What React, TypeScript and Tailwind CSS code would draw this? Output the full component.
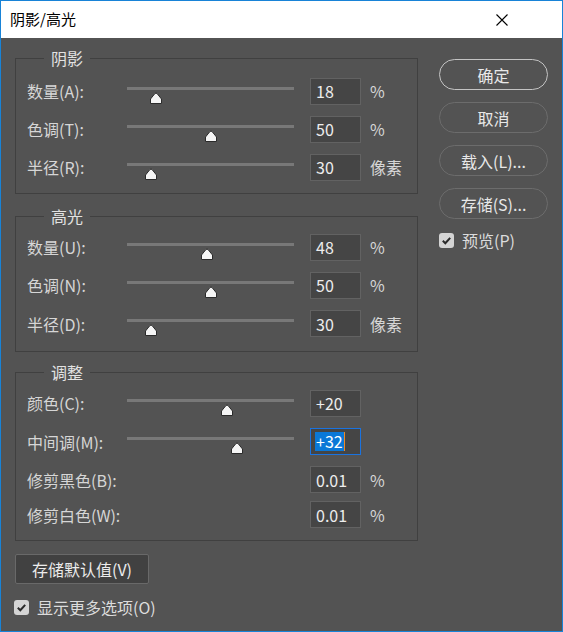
import React from 'react'

const FONT = { fontFamily: '"Microsoft YaHei", "Noto Sans CJK SC", "Noto Sans", sans-serif' }

interface SliderRowProps {
  label: string
  value: string
  pos: number
  unit?: string
  focused?: boolean
  h?: string
}

function Thumb() {
  return (
    <svg width="14" height="14" viewBox="0 0 14 14">
      <path
        d="M1.5 12.5 V8 L5.9 2.6 Q7 1.4 8.1 2.6 L12.5 8 V12.5 Z"
        fill="#f5f5f5"
        stroke="#2b2b2b"
        strokeWidth="1"
        strokeLinejoin="round"
      />
    </svg>
  )
}

function Field({ value, focused }: { value: string; focused?: boolean }) {
  if (focused) {
    return (
      <div className="w-[51px] h-[27px] bg-[#454545] border border-[#1a73e0] flex items-center pl-[4px]">
        <span className="bg-[#0a78d7] text-white text-[16px] leading-[19px] px-[1px]">{value}</span>
        <span className="w-[1px] h-[19px] bg-[#f08a24]" />
      </div>
    )
  }
  return (
    <div className="w-[51px] h-[27px] bg-[#454545] border border-[#626262] flex items-center pl-[5px] text-[16px] leading-[20px] text-[#ededed]">
      {value}
    </div>
  )
}

function SliderRow({ label, value, pos, unit, focused, h = 'h-[38px]' }: SliderRowProps) {
  return (
    <div className={`${h} flex items-center`}>
      <div className="w-[100px] text-[16px] leading-[20px] text-[#d6d6d6] whitespace-nowrap">{label}</div>
      <div className="relative w-[167px] self-stretch">
        <div className="mt-[15px] h-[3px] bg-[#787878]" />
        <div className="absolute top-[19px]" style={{ left: pos - 127 - 7 }}>
          <Thumb />
        </div>
      </div>
      <div className="ml-[16px]">
        <Field value={value} focused={focused} />
      </div>
      {unit && <div className="ml-[9px] text-[16px] leading-[20px] text-[#d6d6d6]">{unit}</div>}
    </div>
  )
}

function PlainRow({ label, value, unit, h }: { label: string; value: string; unit: string; h: string }) {
  return (
    <div className={`${h} flex items-center`}>
      <div className="w-[283px] text-[16px] leading-[20px] text-[#d6d6d6] whitespace-nowrap">{label}</div>
      <Field value={value} />
      <div className="ml-[9px] text-[16px] leading-[20px] text-[#d6d6d6]">{unit}</div>
    </div>
  )
}

function Group({ title, children, className }: { title: string; children: React.ReactNode; className?: string }) {
  return (
    <fieldset className={`border border-[#404040] px-[11px] ${className ?? ''}`}>
      <legend className="ml-[17px] px-[7px] text-[16px] leading-[20px] text-[#e2e2e2]">{title}</legend>
      {children}
    </fieldset>
  )
}

function Check({ label }: { label: string }) {
  return (
    <div className="flex items-center gap-[8px]">
      <div className="w-[15px] h-[15px] rounded-[3px] bg-[#d4d4d4] flex items-center justify-center">
        <svg width="11" height="11" viewBox="0 0 11 11">
          <path d="M1.8 5.8 L4.3 8.2 L9.2 2.8" fill="none" stroke="#2a2a2a" strokeWidth="2" />
        </svg>
      </div>
      <span className="text-[16px] leading-[20px] text-[#dcdcdc]">{label}</span>
    </div>
  )
}

function PillButton({ label, primary }: { label: string; primary?: boolean }) {
  return (
    <button
      className={`w-[109px] h-[31px] rounded-full border text-[16px] leading-[20px] text-[#e8e8e8] ${
        primary ? 'border-[#c4c4c4]' : 'border-[#6c6c6c]'
      }`}
    >
      {label}
    </button>
  )
}

export default function App() {
  return (
    <div style={FONT} className="w-[563px] h-[632px] border border-[#1883d7] flex flex-col overflow-hidden">
      {/* title bar */}
      <div className="h-[37px] bg-white flex items-center justify-between pl-[9px] pr-[54px] shrink-0">
        <span className="text-[15px] text-black">阴影/高光</span>
        <svg width="12" height="12" viewBox="0 0 12 12">
          <path d="M0.5 0.5 L11.5 11.5 M11.5 0.5 L0.5 11.5" stroke="#000" strokeWidth="1.1" />
        </svg>
      </div>

      <div className="flex-1 bg-[#535353] pl-[14px] pt-[10px]">
        <div className="flex">
          <div className="w-[403px]">
            <Group title="阴影" className="pt-[4px] pb-[7px]">
              <SliderRow label="数量(A):" value="18" pos={156} unit="%" />
              <SliderRow label="色调(T):" value="50" pos={211} unit="%" />
              <SliderRow label="半径(R):" value="30" pos={151} unit="像素" />
            </Group>

            <Group title="高光" className="mt-[12px] pt-[2px] pb-[8px]">
              <SliderRow label="数量(U):" value="48" pos={207} unit="%" />
              <SliderRow label="色调(N):" value="50" pos={211} unit="%" />
              <SliderRow label="半径(D):" value="30" pos={151} unit="像素" h="h-[39px]" />
            </Group>

            <Group title="调整" className="mt-[10px] pt-[2px] pb-[9px]">
              <SliderRow label="颜色(C):" value="+20" pos={227} />
              <SliderRow label="中间调(M):" value="+32" pos={237} focused h="h-[39px]" />
              <PlainRow label="修剪黑色(B):" value="0.01" unit="%" h="h-[37px]" />
              <PlainRow label="修剪白色(W):" value="0.01" unit="%" h="h-[33px]" />
            </Group>
          </div>

          <div className="ml-[21px] pt-[11px] flex flex-col gap-[12px]">
            <PillButton label="确定" primary />
            <PillButton label="取消" />
            <PillButton label="载入(L)..." />
            <PillButton label="存储(S)..." />
            <div className="-mt-[1px]">
              <Check label="预览(P)" />
            </div>
          </div>
        </div>

        <button className="mt-[13px] w-[134px] h-[30px] bg-[#414141] border border-[#696969] rounded-[2px] text-[16px] leading-[20px] text-[#ececec]">
          存储默认值(V)
        </button>

        <div className="mt-[13px] -ml-[1px]">
          <Check label="显示更多选项(O)" />
        </div>
      </div>
    </div>
  )
}
